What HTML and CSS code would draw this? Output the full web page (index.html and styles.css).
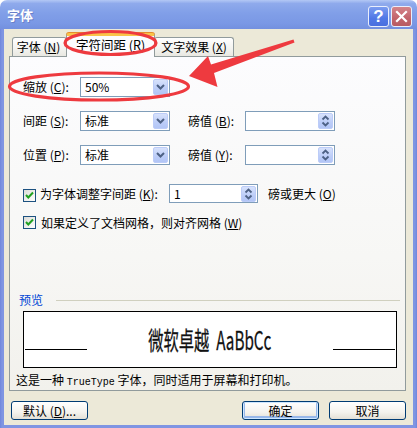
FILE: index.html
```html
<!DOCTYPE html>
<html lang="zh-CN">
<head>
<meta charset="utf-8">
<title>字体</title>
<link rel="stylesheet" href="styles.css">
</head>
<body>
<div class="window">
  <div class="titlebar">
    <span class="title">字体</span>
    <div class="caption-btns">
      <span class="cap-btn cap-help">?</span>
      <span class="cap-btn cap-close"><svg width="19" height="19" viewBox="0 0 19 19"><path d="M5 5 L14 14 M14 5 L5 14" stroke="#fff" stroke-width="2.2" stroke-linecap="square"/></svg></span>
    </div>
  </div>
  <div class="frame">
    <div class="client">
      <div class="tabs">
        <div class="tab tab-first">字体 (<u>N</u>)</div>
        <div class="tab tab-active">字符间距 (<u>R</u>)</div>
        <div class="tab tab-third">文字效果 (<u>X</u>)</div>
      </div>
      <div class="panel">
        <div class="grid">
          <span class="lbl">缩放 (<u>C</u>):</span>
          <div class="combo"><span class="val">50%</span><span class="dd"><svg width="9" height="6" viewBox="0 0 9 6"><path d="M1 1 L4.5 4.5 L8 1" fill="none" stroke="#4d6185" stroke-width="2"/></svg></span></div>
          <span></span><span></span><span></span>

          <span class="lbl">间距 (<u>S</u>):</span>
          <div class="combo"><span class="val">标准</span><span class="dd"><svg width="9" height="6" viewBox="0 0 9 6"><path d="M1 1 L4.5 4.5 L8 1" fill="none" stroke="#4d6185" stroke-width="2"/></svg></span></div>
          <span></span>
          <span class="lbl">磅值 (<u>B</u>):</span>
          <div class="spin"><span class="val"></span><span class="sp"><svg width="9" height="12" viewBox="0 0 9 12"><path d="M1.5 4.5 L4.5 1.5 L7.5 4.5 M1.5 7.5 L4.5 10.5 L7.5 7.5" fill="none" stroke="#4d6185" stroke-width="1.8"/></svg></span></div>

          <span class="lbl">位置 (<u>P</u>):</span>
          <div class="combo"><span class="val">标准</span><span class="dd"><svg width="9" height="6" viewBox="0 0 9 6"><path d="M1 1 L4.5 4.5 L8 1" fill="none" stroke="#4d6185" stroke-width="2"/></svg></span></div>
          <span></span>
          <span class="lbl">磅值 (<u>Y</u>):</span>
          <div class="spin"><span class="val"></span><span class="sp"><svg width="9" height="12" viewBox="0 0 9 12"><path d="M1.5 4.5 L4.5 1.5 L7.5 4.5 M1.5 7.5 L4.5 10.5 L7.5 7.5" fill="none" stroke="#4d6185" stroke-width="1.8"/></svg></span></div>
        </div>

        <div class="check-row row-kern">
          <span class="cb"><svg width="11" height="11" viewBox="0 0 11 11"><path d="M2 5 L4.3 7.5 L9 2.5" fill="none" stroke="#21a121" stroke-width="2"/></svg></span>
          <span class="cb-text kern-text">为字体调整字间距 (<u>K</u>):</span>
          <div class="spin spin-kern"><span class="val">1</span><span class="sp"><svg width="9" height="12" viewBox="0 0 9 12"><path d="M1.5 4.5 L4.5 1.5 L7.5 4.5 M1.5 7.5 L4.5 10.5 L7.5 7.5" fill="none" stroke="#4d6185" stroke-width="1.8"/></svg></span></div>
          <span class="after">磅或更大 (<u>O</u>)</span>
        </div>
        <div class="check-row row-grid">
          <span class="cb"><svg width="11" height="11" viewBox="0 0 11 11"><path d="M2 5 L4.3 7.5 L9 2.5" fill="none" stroke="#21a121" stroke-width="2"/></svg></span>
          <span class="cb-text">如果定义了文档网格，则对齐网格 (<u>W</u>)</span>
        </div>

        <div class="pv-head">
          <span class="pv-label">预览</span>
          <span class="pv-rule"></span>
        </div>
        <div class="pv-box">
          <span class="pv-line"></span>
          <span class="pv-text">微软卓越&nbsp; AaBbCc</span>
          <span class="pv-line"></span>
        </div>
        <div class="note">这是一种 <span class="mono">TrueType</span> 字体，同时适用于屏幕和打印机。</div>
      </div>
      <div class="buttons">
        <span class="btn">默认 (<u>D</u>)...</span>
        <span class="spacer"></span>
        <span class="btn btn-default">确定</span>
        <span class="btn">取消</span>
      </div>
    </div>
  </div>
  <svg class="annot" width="417" height="428" viewBox="0 0 417 428">
    <ellipse cx="110.5" cy="43" rx="45.5" ry="11.5" fill="none" stroke="#ee3a3f" stroke-width="3.2"/>
    <ellipse cx="99" cy="86.5" rx="89.5" ry="13.5" fill="none" stroke="#ee3a3f" stroke-width="3.2"/>
    <polygon points="293.5,39.5 211,64.5 208,56 189,76 217.5,87 214,73 294.5,42.5" fill="#ee3a3f"/>
  </svg>
</div>
</body>
</html>
```

FILE: styles.css
```css
html, body {
  margin: 0;
  padding: 0;
  background: #ffffff;
}

.window {
  position: relative;
  width: 417px;
  height: 428px;
  display: flex;
  flex-direction: column;
  font-family: "Noto Sans CJK SC", "Liberation Sans", sans-serif;
  font-size: 12px;
  color: #000;
  overflow: hidden;
}

u {
  text-decoration: underline;
  text-underline-offset: 1px;
}

/* title bar */
.titlebar {
  height: 29px;
  flex: none;
  display: flex;
  align-items: center;
  justify-content: space-between;
  padding: 0 5px 0 7px;
  background: linear-gradient(to bottom, #b3c8f5 0%, #8faaec 12%, #819fe8 45%, #7a98e5 80%, #7390df 100%);
  border-radius: 7px 7px 0 0;
}

.title {
  color: #fff;
  font-weight: bold;
  font-size: 13px;
  line-height: 14px;
  text-shadow: 1px 1px 0 #6a80c8;
}

.caption-btns {
  display: flex;
  gap: 2px;
  margin-top: 4px;
}

.cap-btn {
  width: 19px;
  height: 19px;
  border: 1px solid #e9eefc;
  border-radius: 3px;
  display: flex;
  align-items: center;
  justify-content: center;
  color: #fff;
}

.cap-help {
  background: linear-gradient(to bottom, #7b9cf0, #5078e6 60%, #4a6fdf);
  font-family: "Liberation Sans", sans-serif;
  font-weight: bold;
  font-size: 17px;
  line-height: 19px;
}

.cap-close {
  background: linear-gradient(to bottom, #d4848a, #c2646b 60%, #b85c62);
}

/* frame */
.frame {
  flex: 1;
  display: flex;
  padding: 0 4px 3px 4px;
  background: linear-gradient(to right, #6f86dc, #7f95e2 2px, #7f95e2 calc(100% - 2px), #6f86dc);
}

.client {
  flex: 1;
  display: flex;
  flex-direction: column;
  background: #ece9d8;
  padding: 4px 7px 0 5px;
}

/* tabs */
.tabs {
  display: flex;
  align-items: flex-end;
  height: 24px;
  padding-left: 3px;
  margin-bottom: -1px;
  position: relative;
  z-index: 1;
}

.tab {
  display: flex;
  align-items: center;
  justify-content: center;
  box-sizing: border-box;
  border: 1px solid #919b9c;
  border-bottom: none;
  border-radius: 3px 3px 0 0;
  background: linear-gradient(to bottom, #ffffff, #f3f3ef 60%, #e9e8e2);
  line-height: 14px;
}

.tab-first {
  width: 55px;
  height: 19px;
  margin-bottom: 1px;
  padding-right: 2px;
}

.tab-active {
  width: 89px;
  height: 24px;
  margin-left: -1px;
  background: #fcfcfe;
  border-top: 3px solid #f9c44a;
  box-shadow: 0 -1px 0 #e68b2c;
  padding-bottom: 3px;
  font-size: 12.5px;
}

.tab-third {
  width: 80px;
  height: 19px;
  margin-bottom: 1px;
  margin-left: -1px;
}

/* panel */
.panel {
  height: 335px;
  flex: none;
  box-sizing: border-box;
  border: 1px solid #919b9c;
  background: linear-gradient(to bottom, #fcfcfe, #f7f7f5 60%, #f2f1ec);
  display: flex;
  flex-direction: column;
}

.grid {
  margin-top: 20px;
  padding-left: 13px;
  display: grid;
  grid-template-columns: 57px 90px 18px 57px 90px;
  grid-auto-rows: 20px;
  row-gap: 14px;
  align-items: center;
}

.lbl {
  line-height: 14px;
}

.combo, .spin {
  height: 20px;
  box-sizing: border-box;
  border: 1px solid #7f9db9;
  background: #fff;
  display: flex;
  align-items: center;
  justify-content: space-between;
  padding: 1px;
}

.val {
  padding-left: 3px;
  line-height: 14px;
}

.dd, .sp {
  width: 15px;
  height: 16px;
  box-sizing: border-box;
  border: 1px solid #bcccf8;
  border-radius: 2px;
  background: linear-gradient(to bottom, #d7e2fc, #bccdf8 60%, #b2c5f6);
  display: flex;
  align-items: center;
  justify-content: center;
}

.check-row {
  display: flex;
  align-items: center;
  padding-left: 13px;
}

.row-kern {
  margin-top: 19px;
  height: 19px;
}

.row-grid {
  margin-top: 13px;
  height: 13px;
}

.cb {
  width: 13px;
  height: 13px;
  box-sizing: border-box;
  border: 1px solid #1c5180;
  background: linear-gradient(135deg, #dcdcd7, #ffffff);
  display: flex;
  align-items: center;
  justify-content: center;
  margin-top: 3px;
}

.row-grid .cb {
  margin-top: 0;
}

.cb-text {
  margin-left: 4px;
  line-height: 14px;
}

.row-grid .cb-text {
  margin-left: 5px;
}

.kern-text {
  width: 129px;
}

.spin-kern {
  width: 89px;
  height: 19px;
}

.after {
  margin-left: 10px;
  line-height: 14px;
}

/* preview */
.pv-head {
  margin-top: 65px;
  display: flex;
  align-items: center;
  padding-left: 9px;
  padding-right: 5px;
  height: 12px;
}

.pv-label {
  color: #0046d5;
  line-height: 12px;
}

.pv-rule {
  flex: 1;
  height: 1px;
  background: #d0d0bf;
  margin-left: 13px;
}

.pv-box {
  margin-top: 5px;
  margin-left: 13px;
  width: 374px;
  height: 58px;
  box-sizing: border-box;
  border: 1px solid #000;
  background: #fff;
  display: flex;
  justify-content: space-between;
  align-items: flex-end;
  padding: 0 1px 17px 1px;
}

.pv-line {
  width: 62px;
  height: 1px;
  background: #000;
}

.pv-text {
  font-size: 25px;
  font-weight: 400;
  line-height: 25px;
  transform: scaleX(0.61);
  white-space: nowrap;
  margin: 0 -80px -2px;
  color: #111;
  -webkit-text-stroke: 0.3px #111;
}

.note {
  margin-top: 5px;
  padding-left: 6px;
  line-height: 14px;
}

.mono {
  font-family: "Liberation Mono", monospace;
  font-size: 10px;
}

/* buttons */
.buttons {
  margin-top: 10px;
  display: flex;
  padding-left: 2px;
  gap: 10px;
}

.spacer {
  flex: 1;
}

.btn {
  width: 77px;
  height: 19px;
  box-sizing: border-box;
  border: 1px solid #003c74;
  border-radius: 3px;
  background: linear-gradient(to bottom, #ffffff, #f4f3ee 60%, #e3e0d6);
  display: flex;
  align-items: center;
  justify-content: center;
  line-height: 14px;
}

.btn-default {
  box-shadow: inset 0 0 0 1px #cee7ff, inset 0 -1px 0 2px #98b8ea;
}

/* annotations */
.annot {
  position: absolute;
  left: 0;
  top: 0;
  z-index: 5;
  pointer-events: none;
}
```
